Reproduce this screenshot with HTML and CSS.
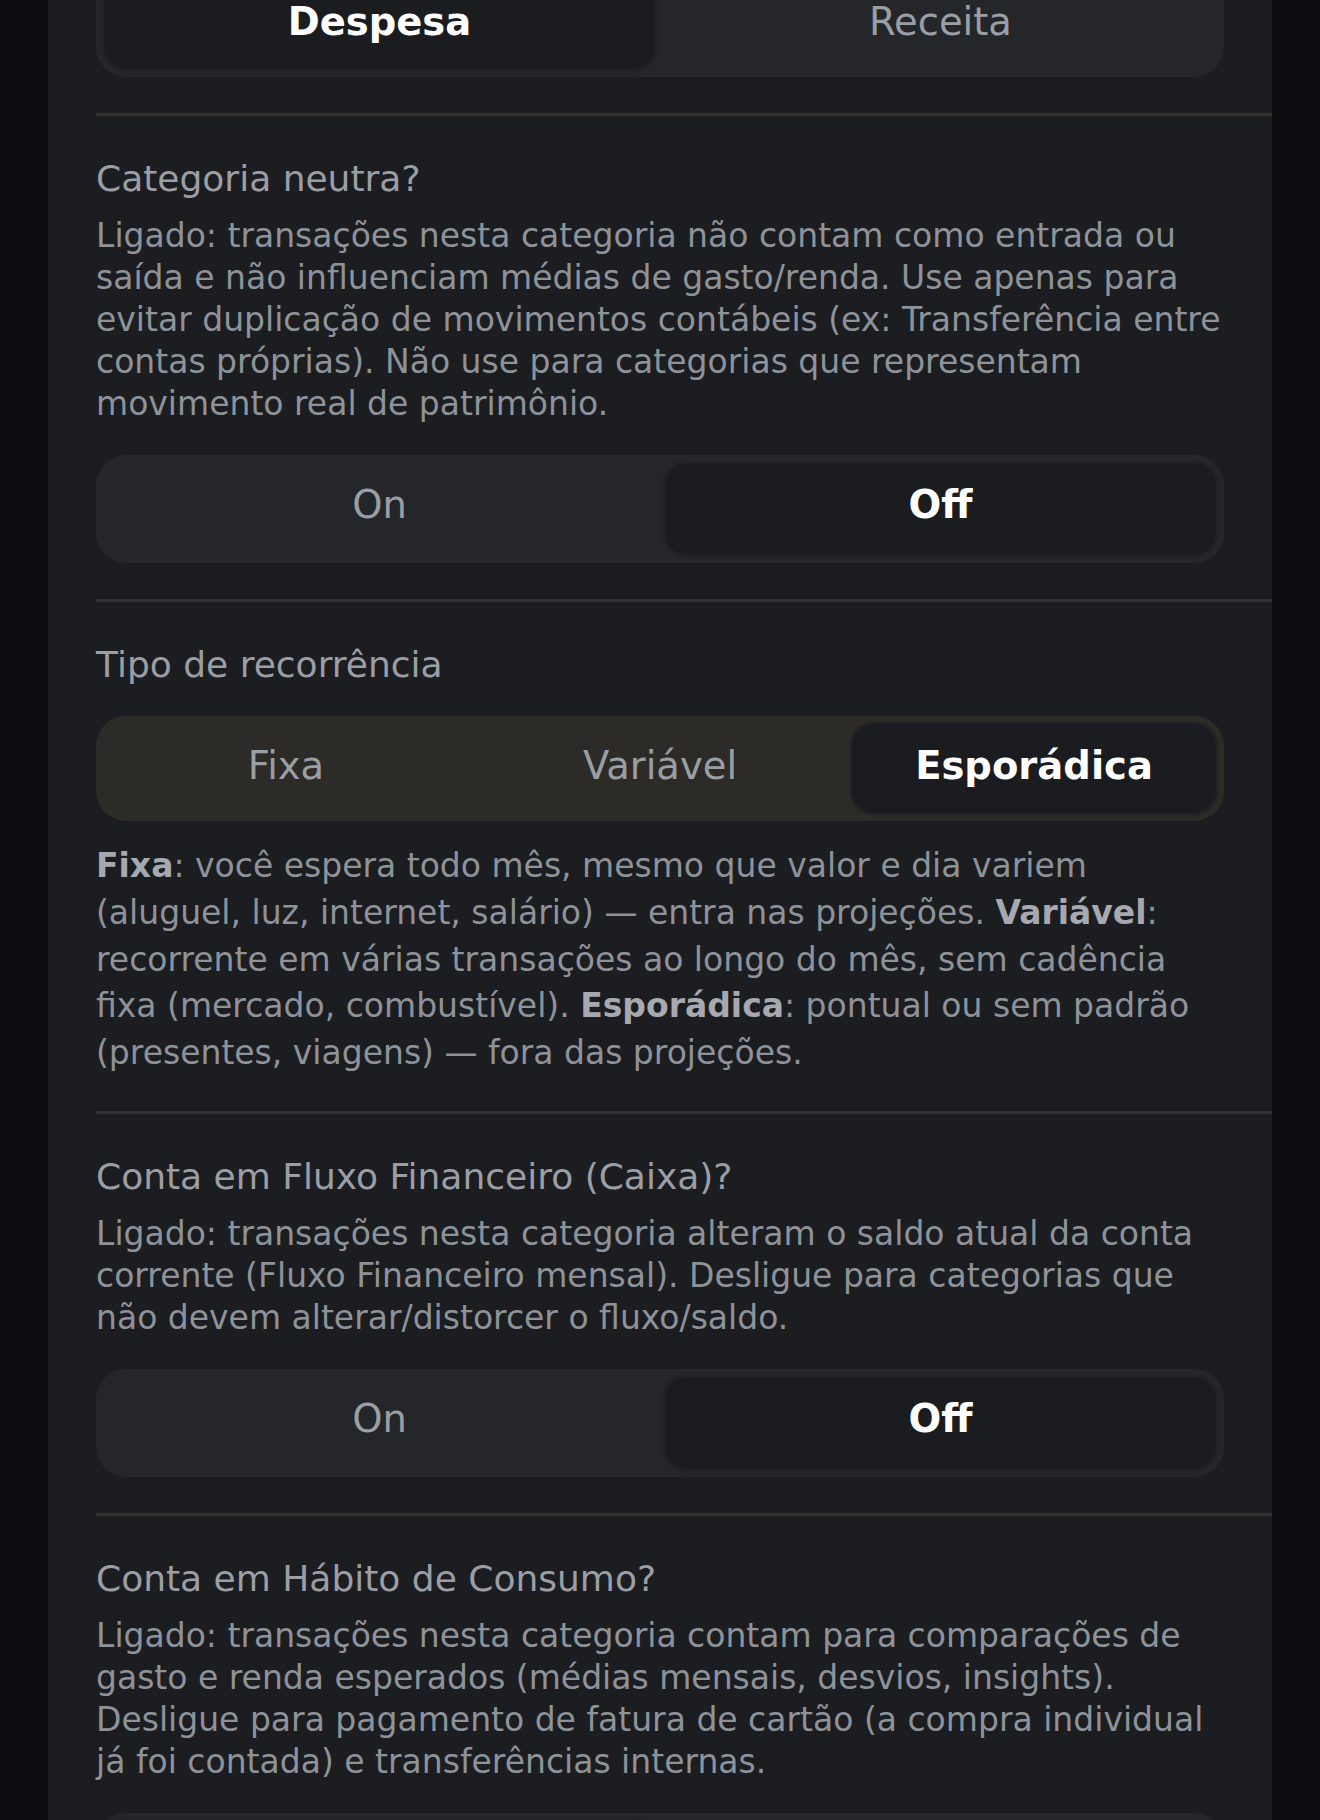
FILE: index.html
```html
<!DOCTYPE html>
<html lang="pt-BR">
<head>
<meta charset="utf-8">
<title>Categoria</title>
<link rel="stylesheet" href="styles.css">
</head>
<body>
<div class="panel">
  <div class="top">
    <div class="seg seg-2">
      <div class="seg-btn active">Despesa</div>
      <div class="seg-btn">Receita</div>
    </div>
  </div>

  <section class="section">
    <h3 class="title">Categoria neutra?</h3>
    <p class="desc">Ligado: transações nesta categoria não contam como entrada ou saída e não influenciam médias de gasto/renda. Use apenas para evitar duplicação de movimentos contábeis (ex: Transferência entre contas próprias). Não use para categorias que representam movimento real de patrimônio.</p>
    <div class="seg seg-2 toggle">
      <div class="seg-btn">On</div>
      <div class="seg-btn active">Off</div>
    </div>
  </section>

  <section class="section section-text-end">
    <h3 class="title title-solo">Tipo de recorrência</h3>
    <div class="seg seg-3 warm">
      <div class="seg-btn">Fixa</div>
      <div class="seg-btn">Variável</div>
      <div class="seg-btn active">Esporádica</div>
    </div>
    <p class="desc loose"><strong>Fixa</strong>: você espera todo mês, mesmo que valor e dia variem (aluguel, luz, internet, salário) — entra nas projeções. <strong>Variável</strong>: recorrente em várias transações ao longo do mês, sem cadência fixa (mercado, combustível). <strong>Esporádica</strong>: pontual ou sem padrão (presentes, viagens) — fora das projeções.</p>
  </section>

  <section class="section">
    <h3 class="title">Conta em Fluxo Financeiro (Caixa)?</h3>
    <p class="desc">Ligado: transações nesta categoria alteram o saldo atual da conta corrente (Fluxo Financeiro mensal). Desligue para categorias que não devem alterar/distorcer o fluxo/saldo.</p>
    <div class="seg seg-2 toggle">
      <div class="seg-btn">On</div>
      <div class="seg-btn active">Off</div>
    </div>
  </section>

  <section class="section">
    <h3 class="title">Conta em Hábito de Consumo?</h3>
    <p class="desc">Ligado: transações nesta categoria contam para comparações de gasto e renda esperados (médias mensais, desvios, insights). Desligue para pagamento de fatura de cartão (a compra individual já foi contada) e transferências internas.</p>
    <div class="seg seg-2 toggle">
      <div class="seg-btn active">On</div>
      <div class="seg-btn">Off</div>
    </div>
  </section>
</div>
</body>
</html>
```

FILE: styles.css
```css
html, body {
  margin: 0;
  padding: 0;
  height: 1820px;
  overflow: hidden;
  background: #0d0e11;
  font-family: "DejaVu Sans", "Liberation Sans", sans-serif;
}

.panel {
  margin: -28px 48px 0 48px;
  padding-left: 48px;
  background: #1c1d21;
  min-height: 2000px;
}

.top {
  padding-right: 48px;
  padding-bottom: 36px;
}

.section {
  border-top: 3px solid #35322b;
  padding: 40px 48px 36.5px 0;
}

.section-text-end {
  padding-bottom: 34px;
}

.title {
  margin: 0 0 13px 0;
  font-size: 36px;
  line-height: 45.76px;
  font-weight: 400;
  color: #9b9ea5;
}

.title-solo {
  margin-bottom: 28px;
}

.desc {
  margin: 0 0 30px 0;
  font-size: 33px;
  line-height: 42px;
  color: #8e9299;
}

.desc strong {
  font-weight: 700;
  color: #a6a9af;
}

.desc.loose {
  line-height: 46.8px;
  margin: 22px 0 0 0;
}

.seg {
  display: grid;
  gap: 6px;
  padding: 6px;
  border-radius: 30px;
  background: #25262a;
}

.seg-2 {
  grid-template-columns: 1fr 1fr;
}

.seg-3 {
  grid-template-columns: 1fr 1fr 1fr;
}

.seg.warm {
  background: #2d2b27;
}

.seg-btn {
  padding: 22px 0 27px 0;
  font-size: 38.5px;
  line-height: 44px;
  text-align: center;
  color: #9a9ea5;
  border-radius: 24px;
}

.toggle .seg-btn {
  padding-bottom: 30px;
}

.seg-btn.active {
  background: #1b1c1f;
  color: #ffffff;
  font-weight: 700;
  box-shadow: inset 0 0 0 2px rgba(255, 255, 255, 0.03), 0 0 3px rgba(0, 0, 0, 0.12);
}
```
